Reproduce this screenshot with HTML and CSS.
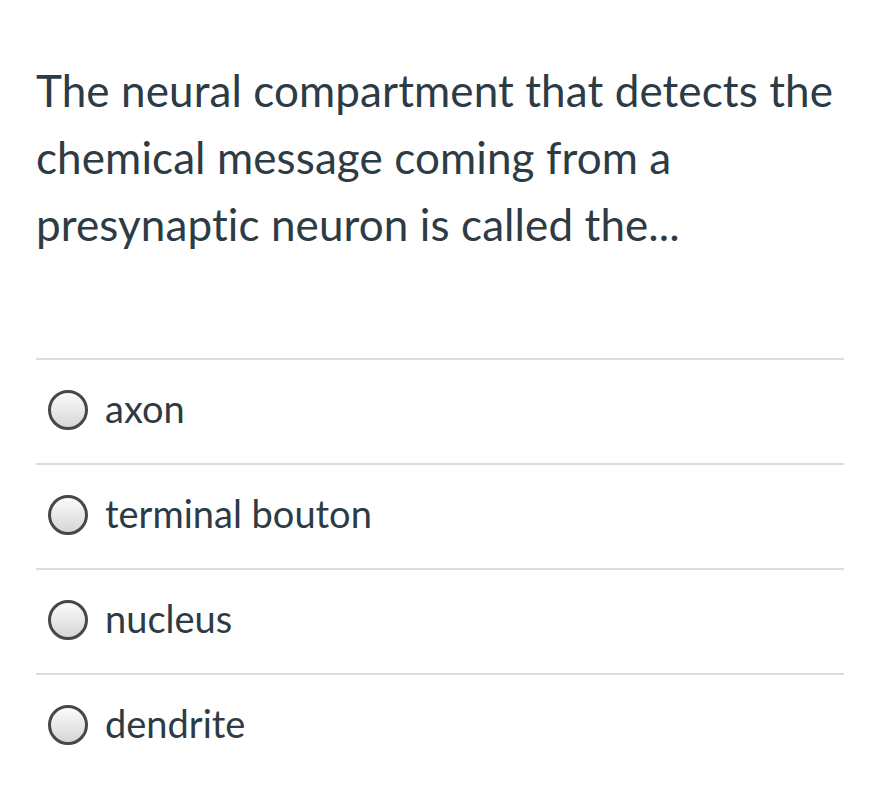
FILE: index.html
```html
<!DOCTYPE html>
<html lang="en">
<head>
<meta charset="utf-8">
<title>Question</title>
<link rel="stylesheet" href="styles.css">
</head>
<body>
<div class="quiz">
  <p class="question">The neural compartment that detects the chemical message coming from a presynaptic neuron is called the...</p>
  <ul class="answers">
    <li class="answer"><span class="radio"></span><span class="label">axon</span></li>
    <li class="answer"><span class="radio"></span><span class="label">terminal bouton</span></li>
    <li class="answer"><span class="radio"></span><span class="label">nucleus</span></li>
    <li class="answer"><span class="radio"></span><span class="label">dendrite</span></li>
  </ul>
</div>
</body>
</html>
```
FILE: styles.css
```css
html, body {
  margin: 0;
  padding: 0;
  background: #ffffff;
}
body {
  font-family: Lato, "Liberation Sans", sans-serif;
  color: #2d3b45;
}
.quiz {
  padding: 57px 26px 0 36px;
}
.question {
  margin: 0;
  font-size: 44px;
  line-height: 67px;
  letter-spacing: 0.1px;
}
.answers {
  list-style: none;
  margin: 100px 0 0 0;
  padding: 0;
}
.answer {
  display: flex;
  align-items: center;
  height: 95px;
  padding-bottom: 8px;
  border-top: 2px solid #dcdcdc;
}
.radio {
  flex: none;
  width: 34px;
  height: 34px;
  margin-left: 12px;
  margin-top: 4px;
  border: 3px solid #474747;
  border-radius: 50%;
  background: linear-gradient(#fbfbfb, #d6d6d6);
}
.label {
  margin-left: 17px;
  font-size: 38px;
  line-height: 38px;
}
```
